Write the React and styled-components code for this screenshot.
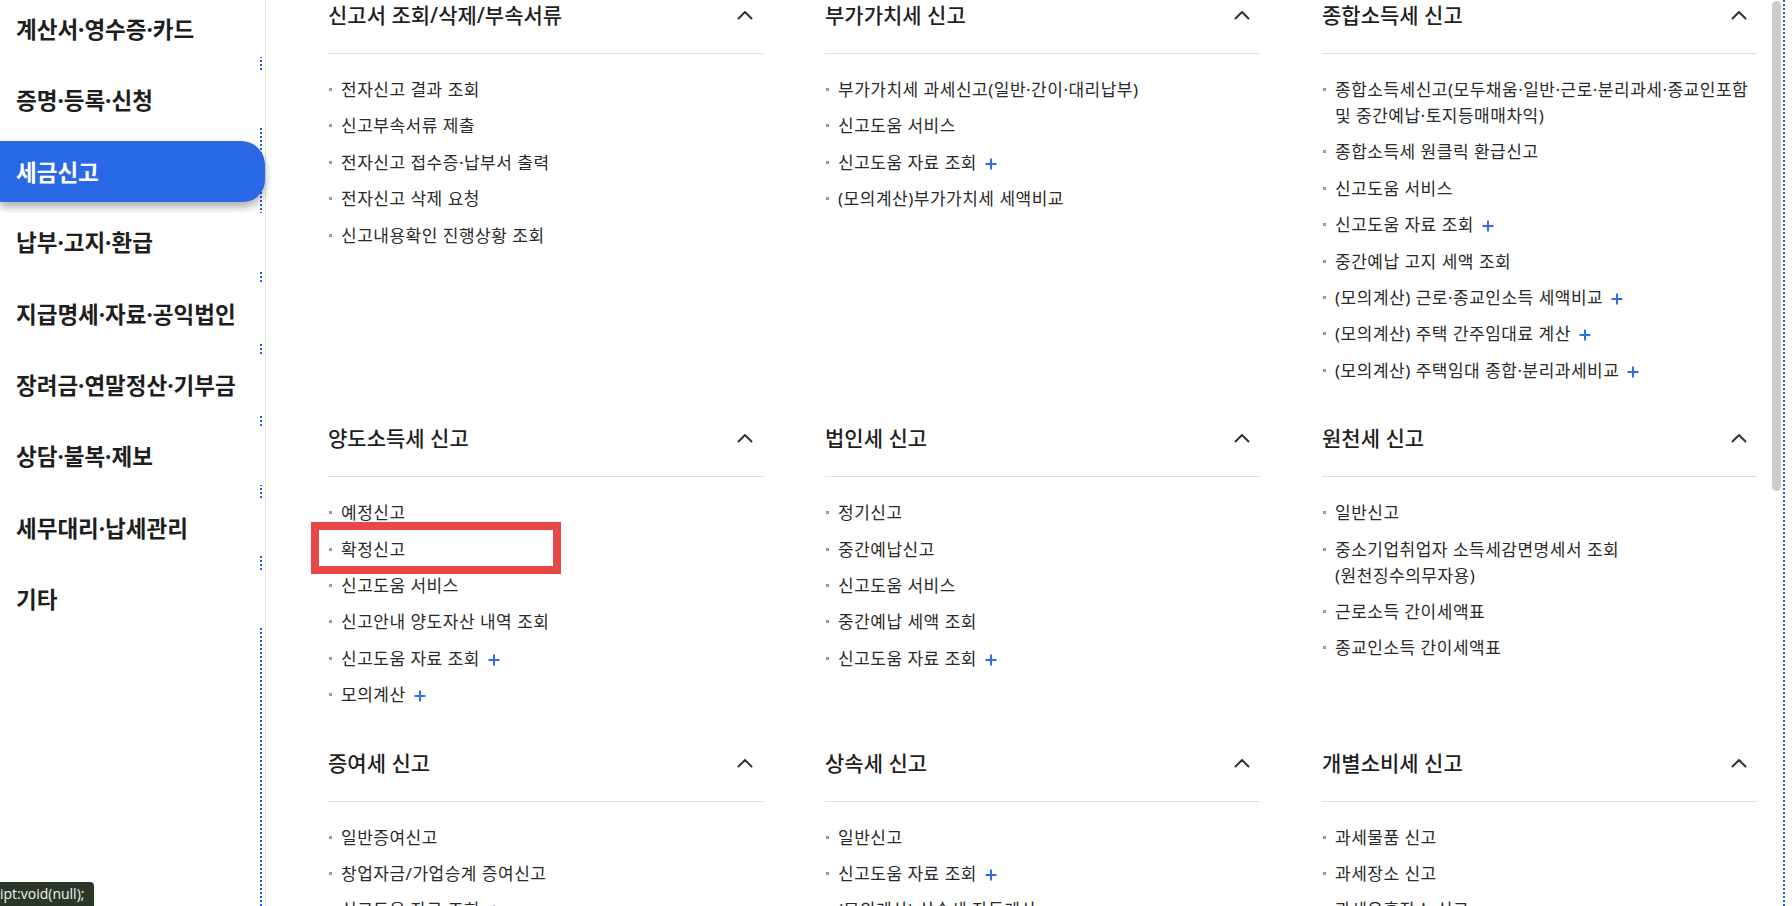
import React from "react";
import styled, { createGlobalStyle } from "styled-components";

const GlobalStyle = createGlobalStyle`
  html, body { margin: 0; padding: 0; background: #fff; overflow: hidden; }
  body { font-family: "Noto Sans", "Noto Sans CJK KR", sans-serif; }
  * { box-sizing: border-box; }
  ul { margin: 0; padding: 0; list-style: none; }
`;

const Page = styled.div`
  position: relative;
  display: flex;
  width: 1792px;
  height: 906px;
  overflow: hidden;
  background: #fff;
`;

const Sidebar = styled.nav`
  position: relative;
  z-index: 2;
  flex: 0 0 266px;
  margin-top: -1px;
  border-right: 1px solid #e3e5ef;
  display: flex;
  flex-direction: column;
`;

const SideItem = styled.a`
  display: flex;
  align-items: center;
  width: 265px;
  height: ${(p) => (p.$active ? 61 : 58)}px;
  margin: ${(p) => (p.$active ? "-1px 0 11.33px" : "0 0 13.33px")};
  padding-left: 16px;
  font-size: 22.5px;
  font-weight: 700;
  color: ${(p) => (p.$active ? "#fff" : "#1e1e1e")};
  background: ${(p) => (p.$active ? "#2a69e6" : "#fff")};
  border-radius: ${(p) => (p.$active ? "0 24px 22px 0" : "0")};
  box-shadow: ${(p) => (p.$active ? "0 5px 9px rgba(0,0,0,0.32)" : "none")};
  text-decoration: none;
`;

const Main = styled.main`
  flex: 1;
  padding-left: 62px;
`;

const Grid = styled.div`
  display: grid;
  grid-template-columns: repeat(3, 435px);
  column-gap: 62px;
  align-items: start;
`;

const Section = styled.section`
  margin-bottom: 39.5px;
`;

const SectionHead = styled.div`
  display: flex;
  align-items: center;
  justify-content: space-between;
  height: 54px;
  padding-bottom: 23px;
  border-bottom: 1px solid #dedfe6;
`;

const SectionTitle = styled.h3`
  margin: 0;
  font-size: 21px;
  font-weight: 500;
  line-height: 30px;
  color: #1f1f1f;
`;

const Chevron = styled.svg`
  width: 16px;
  height: 10px;
  margin-right: 10px;
`;

const List = styled.ul`
  display: flex;
  flex-direction: column;
  gap: 10.4px;
  padding-top: 23px;
`;

const Item = styled.li`
  display: flex;
  align-items: flex-start;
  gap: 9px;
  padding-left: 1px;
`;

const Bullet = styled.span`
  flex: 0 0 3px;
  width: 3px;
  height: 3px;
  margin-top: 11px;
  background: #9a9a9a;
`;

const ItemText = styled.a`
  font-size: 17px;
  letter-spacing: 0.5px;
  line-height: 26px;
  color: #2a2a2a;
  white-space: pre-line;
  text-decoration: none;
`;

const Plus = styled.svg`
  width: 12px;
  height: 12px;
  margin-left: 8px;
  vertical-align: -1px;
`;

const FocusRing = styled.div`
  position: absolute;
  z-index: 1;
  left: 260px;
  right: 7px;
  top: -20px;
  bottom: -20px;
  border: 2px dotted #1f5ff0;
  pointer-events: none;
`;

const ScrollThumb = styled.div`
  position: absolute;
  z-index: 3;
  left: 1772px;
  top: 1px;
  width: 9px;
  height: 490px;
  border-radius: 5px;
  background: #cdcdcd;
`;

const Highlight = styled.div`
  position: absolute;
  z-index: 3;
  left: 311px;
  top: 522px;
  width: 250px;
  height: 52px;
  border: 8px solid #e84848;
  pointer-events: none;
`;

const StatusTip = styled.div`
  position: absolute;
  z-index: 4;
  left: 0;
  bottom: 0;
  width: 94px;
  height: 24px;
  border-top-right-radius: 4px;
  background: #2b3829;
  color: #f2f2f2;
  font-family: "Open Sans", "Noto Sans", sans-serif;
  font-size: 14px;
  line-height: 24px;
  white-space: nowrap;
`;

const sideMenu = [
  "계산서·영수증·카드",
  "증명·등록·신청",
  "세금신고",
  "납부·고지·환급",
  "지급명세·자료·공익법인",
  "장려금·연말정산·기부금",
  "상담·불복·제보",
  "세무대리·납세관리",
  "기타",
];

const P = (t) => ({ t, plus: true });

const sections = [
  {
    title: "신고서 조회/삭제/부속서류",
    items: ["전자신고 결과 조회", "신고부속서류 제출", "전자신고 접수증·납부서 출력", "전자신고 삭제 요청", "신고내용확인 진행상황 조회"],
  },
  {
    title: "부가가치세 신고",
    items: ["부가가치세 과세신고(일반·간이·대리납부)", "신고도움 서비스", P("신고도움 자료 조회"), "(모의계산)부가가치세 세액비교"],
  },
  {
    title: "종합소득세 신고",
    items: [
      "종합소득세신고(모두채움·일반·근로·분리과세·종교인포함\n및 중간예납·토지등매매차익)",
      "종합소득세 원클릭 환급신고",
      "신고도움 서비스",
      P("신고도움 자료 조회"),
      "중간예납 고지 세액 조회",
      P("(모의계산) 근로·종교인소득 세액비교"),
      P("(모의계산) 주택 간주임대료 계산"),
      P("(모의계산) 주택임대 종합·분리과세비교"),
    ],
  },
  {
    title: "양도소득세 신고",
    items: ["예정신고", "확정신고", "신고도움 서비스", "신고안내 양도자산 내역 조회", P("신고도움 자료 조회"), P("모의계산")],
  },
  {
    title: "법인세 신고",
    items: ["정기신고", "중간예납신고", "신고도움 서비스", "중간예납 세액 조회", P("신고도움 자료 조회")],
  },
  {
    title: "원천세 신고",
    items: ["일반신고", "중소기업취업자 소득세감면명세서 조회\n(원천징수의무자용)", "근로소득 간이세액표", "종교인소득 간이세액표"],
  },
  {
    title: "증여세 신고",
    items: ["일반증여신고", "창업자금/가업승계 증여신고", P("신고도움 자료 조회")],
  },
  {
    title: "상속세 신고",
    items: ["일반신고", P("신고도움 자료 조회"), "(모의계산) 상속세 자동계산"],
  },
  {
    title: "개별소비세 신고",
    items: ["과세물품 신고", "과세장소 신고", "과세유흥장소 신고"],
  },
];

const ChevronUp = () => (
  <Chevron viewBox="0 0 16 10" fill="none">
    <polyline points="1.5,8.5 8,2 14.5,8.5" stroke="#333" strokeWidth="2" strokeLinecap="round" strokeLinejoin="round" />
  </Chevron>
);

const PlusIcon = () => (
  <Plus viewBox="0 0 12 12" fill="none">
    <path d="M6 0.5v11M0.5 6h11" stroke="#2f6fe6" strokeWidth="2" />
  </Plus>
);

export default function App() {
  return (
    <>
      <GlobalStyle />
      <Page>
        <FocusRing />
        <Sidebar>
          {sideMenu.map((m) => (
            <SideItem key={m} href="#" $active={m === "세금신고"}>
              {m}
            </SideItem>
          ))}
        </Sidebar>
        <Main>
          <Grid>
            {sections.map((s) => (
              <Section key={s.title}>
                <SectionHead>
                  <SectionTitle>{s.title}</SectionTitle>
                  <ChevronUp />
                </SectionHead>
                <List>
                  {s.items.map((it, i) => {
                    const text = typeof it === "string" ? it : it.t;
                    const plus = typeof it !== "string";
                    return (
                      <Item key={i}>
                        <Bullet />
                        <ItemText href="#">
                          {text}
                          {plus && <PlusIcon />}
                        </ItemText>
                      </Item>
                    );
                  })}
                </List>
              </Section>
            ))}
          </Grid>
        </Main>
        <ScrollThumb />
        <Highlight />
        <StatusTip>ipt:void(null);</StatusTip>
      </Page>
    </>
  );
}
